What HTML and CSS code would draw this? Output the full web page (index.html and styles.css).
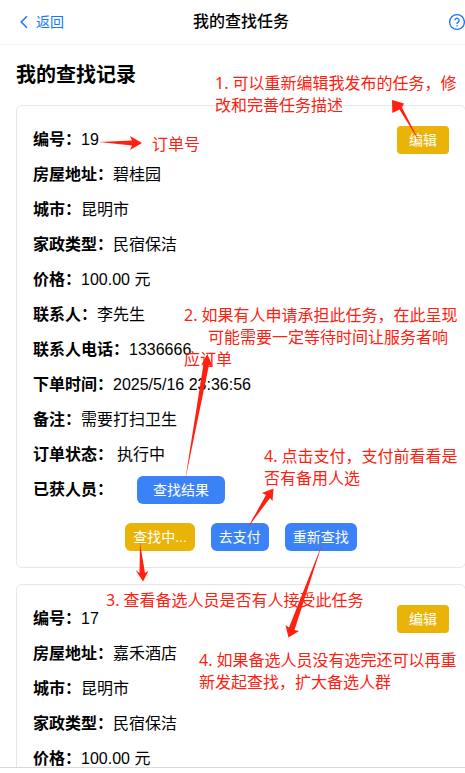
FILE: index.html
```
<!DOCTYPE html>
<html lang="zh-CN">
<head>
<meta charset="utf-8">
<meta name="viewport" content="width=device-width, initial-scale=1">
<title>我的查找任务</title>
<link rel="stylesheet" href="styles.css">
</head>
<body>
<div class="app">
  <header class="topbar">
    <a class="back" href="#">
      <svg class="back-icon" viewBox="0 0 8 14" aria-hidden="true"><path d="M7 1.2 1.2 7 7 12.8"/></svg>
      <span>返回</span>
    </a>
    <h1 class="topbar-title">我的查找任务</h1>
    <button class="help" type="button" aria-label="帮助">
      <svg viewBox="0 0 18 18" aria-hidden="true">
        <circle cx="9" cy="9" r="7.4"/>
        <path d="M6.900 7.300a2.100 2.100 0 1 1 3.300 1.800c-.8.5-1.200.8-1.200 1.600v.3"/>
        <path d="M9 12.200v1.200"/>
      </svg>
    </button>
  </header>

  <main class="content">
    <h2 class="heading">我的查找记录</h2>

    <section class="card">
      <div class="row row-split"><p><b>编号：</b>19</p><button class="btn btn-edit" type="button">编辑</button></div>
      <p class="row"><b>房屋地址：</b>碧桂园</p>
      <p class="row"><b>城市：</b>昆明市</p>
      <p class="row"><b>家政类型：</b>民宿保洁</p>
      <p class="row"><b>价格：</b>100.00 元</p>
      <p class="row"><b>联系人：</b>李先生</p>
      <p class="row"><b>联系人电话：</b>1336666</p>
      <p class="row"><b>下单时间：</b>2025/5/16 23:36:56</p>
      <p class="row"><b>备注：</b>需要打扫卫生</p>
      <p class="row"><b>订单状态：</b><span class="status">执行中</span></p>
      <div class="row row-result"><b>已获人员：</b><button class="btn btn-result" type="button">查找结果</button></div>
      <div class="actions">
        <button class="btn btn-warn" type="button">查找中...</button>
        <button class="btn" type="button">去支付</button>
        <button class="btn" type="button">重新查找</button>
      </div>
    </section>

    <section class="card">
      <div class="row row-split"><p><b>编号：</b>17</p><button class="btn btn-edit" type="button">编辑</button></div>
      <p class="row"><b>房屋地址：</b>嘉禾酒店</p>
      <p class="row"><b>城市：</b>昆明市</p>
      <p class="row"><b>家政类型：</b>民宿保洁</p>
      <p class="row"><b>价格：</b>100.00 元</p>
    </section>
  </main>
  <footer class="tabbar"></footer>

  <div class="notes">
    <p class="note note-edit">1. 可以重新编辑我发布的任务，修<br>改和完善任务描述</p>
    <p class="note note-number">订单号</p>
    <p class="note note-result">2. 如果有人申请承担此任务，在此呈现<br><span class="note-indent">可能需要一定等待时间让服务者响</span><br>应订单</p>
    <p class="note note-pay">4. 点击支付，支付前看看是<br>否有备用人选</p>
    <p class="note note-search">3. 查看备选人员是否有人接受此任务</p>
    <p class="note note-retry">4. 如果备选人员没有选完还可以再重<br>新发起查找，扩大备选人群</p>
    <svg class="arrows" viewBox="0 0 465 773" aria-hidden="true">
      <path d="M99 142 132 140.500 130 136 142 143 130 150 132 145.500Z"/>
      <path d="M420.500 143.500 399.500 109.500 392.300 113 392 100 404 103.500 402 107.500Z"/>
      <path d="M185 481 203.500 364 201 365.500 207.300 354 213 367 209 365Z"/>
      <path d="M247.500 528 266 495 262 493 273.500 488.500 272.500 501 270 498Z"/>
      <path d="M140 543 139.500 573 135.500 570 143 581.500 148.500 571 145 573Z"/>
      <path d="M322.500 543 289 627.500 285.500 625 288.500 637.500 299 631 294.500 630Z"/>
    </svg>
  </div>
</div>
</body>
</html>
```

FILE: styles.css
```
* {
  box-sizing: border-box;
}

body,
h1,
h2,
p {
  margin: 0;
}

body {
  overflow: hidden;
  background: #fff;
  color: #000;
  font: 16px/24px "Liberation Sans", "Noto Sans CJK SC", sans-serif;
}

/* The page runs 17px past the right side of the window. */
.app {
  position: relative;
  display: flex;
  flex-direction: column;
  width: calc(100% + 17px);
  height: 100vh;
}

.topbar {
  display: grid;
  grid-template-columns: 1fr auto 1fr;
  align-items: center;
  flex: none;
  height: 45px;
  padding: 0 16px;
  border-bottom: 1px solid #f3f4f6;
}

.back {
  display: flex;
  align-items: center;
  gap: 8px;
  padding-left: 4px;
  color: #1677ff;
  font-size: 14px;
  text-decoration: none;
}

.back-icon {
  width: 8px;
  height: 14px;
  fill: none;
  stroke: currentColor;
  stroke-width: 1.5;
}

.topbar-title {
  font-size: 16px;
  font-weight: 500;
}

.help {
  justify-self: end;
  display: flex;
  padding: 0;
  border: 0;
  background: none;
  color: #1677ff;
}

.help svg {
  width: 18px;
  height: 18px;
  fill: none;
  stroke: currentColor;
  stroke-width: 1.3;
}

.content {
  flex: 1;
  min-height: 0;
  overflow: hidden;
  padding: 16px;
}

.heading {
  margin-bottom: 16px;
  font-size: 20px;
  line-height: 28px;
}

.card {
  margin-bottom: 16px;
  padding: 16px;
  border: 1px solid #e5e7eb;
  border-radius: 6px;
}

.row {
  line-height: 35px;
}

.row-split {
  display: flex;
  align-items: center;
  justify-content: space-between;
}

.row-result {
  display: flex;
  align-items: center;
  gap: 24px;
}

.status {
  margin-left: 4px;
}

.btn {
  height: 28px;
  padding: 0 8px;
  border: 0;
  border-radius: 6px;
  background: #3b82f6;
  color: #fff;
  font: 14px/20px "Liberation Sans", "Noto Sans CJK SC", sans-serif;
}

.btn-result {
  padding: 0 16px;
}

.btn-edit {
  padding: 0 12px;
  border-radius: 4px;
  background: #eab308;
}

.btn-warn {
  background: #eab308;
}

.actions {
  display: flex;
  justify-content: center;
  gap: 16px;
  margin-top: 16px;
}

.tabbar {
  flex: none;
  height: 6px;
  border-top: 1px solid #d9d9d9;
}

/* Hand-placed remarks and arrows over the page. */
.notes {
  position: absolute;
  inset: 0;
  pointer-events: none;
}

.note {
  position: absolute;
  color: #ff2010;
  font: 16px/22px "Noto Sans", "Noto Sans CJK SC", sans-serif;
  white-space: nowrap;
}

.note-edit {
  left: 215px;
  top: 72px;
}

.note-number {
  left: 152px;
  top: 133px;
}

.note-result {
  left: 184px;
  top: 304px;
}

.note-indent {
  padding-left: 24px;
}

.note-pay {
  left: 264px;
  top: 445px;
}

.note-search {
  left: 106px;
  top: 589px;
}

.note-retry {
  left: 199px;
  top: 649px;
}

.arrows {
  position: absolute;
  left: 0;
  top: 0;
  width: 465px;
  height: 773px;
  fill: #ff2010;
}
```
